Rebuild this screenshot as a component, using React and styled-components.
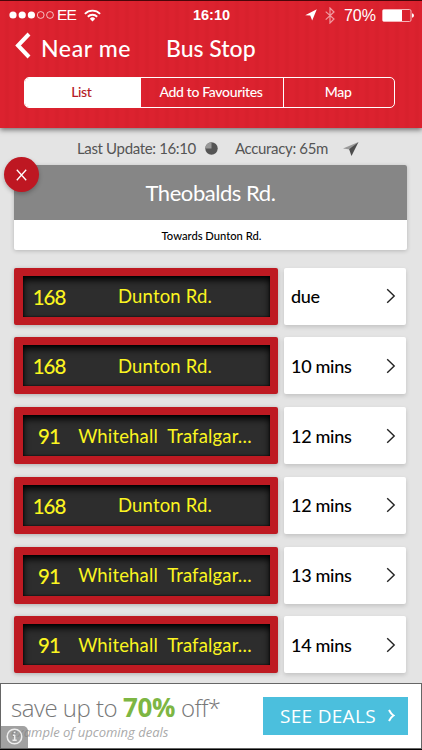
import React from "react";
import styled, { createGlobalStyle } from "styled-components";

const buses = [
  { route: "168", to: "Dunton Rd.", time: "due" },
  { route: "168", to: "Dunton Rd.", time: "10 mins" },
  { route: "91", to: "Whitehall  Trafalgar…", time: "12 mins" },
  { route: "168", to: "Dunton Rd.", time: "12 mins" },
  { route: "91", to: "Whitehall  Trafalgar…", time: "13 mins" },
  { route: "91", to: "Whitehall  Trafalgar…", time: "14 mins" },
];

const App = () => {
  return (
    <Screen>
      <GlobalStyle />
      <Header>
        <StatusBar>
          <Side>
            <svg width="46" height="8" viewBox="0 0 46 8" fill="#fff">
              <circle cx="4" cy="4" r="3.6" />
              <circle cx="13.2" cy="4" r="3.6" />
              <circle cx="22.4" cy="4" r="3.6" />
              <g fill="none" stroke="#fff" strokeWidth="0.7">
                <circle cx="31.7" cy="4" r="3.4" />
                <circle cx="41" cy="4" r="3.4" />
              </g>
            </svg>
            <Carrier>EE</Carrier>
            <svg width="17" height="13" viewBox="0 0 17 13" fill="none" stroke="#fff" strokeWidth="1.9">
              <path d="M0.9 4.8a10.8 10.8 0 0 1 15.2 0" />
              <path d="M3.8 7.7a6.7 6.7 0 0 1 9.4 0" />
              <path d="M8.5 12.4L5.8 9.7a3.8 3.8 0 0 1 5.4 0z" fill="#fff" stroke="none" />
            </svg>
          </Side>
          <Clock>16:10</Clock>
          <Side $end>
            <svg width="12" height="12" viewBox="0 0 12 12" fill="#fff">
              <path d="M11.8 0.2L0.2 6.2l5 0.4 2 5z" />
            </svg>
            <Bluetooth width="10" height="17" viewBox="0 0 10 17">
              <path d="M0.7 4.6L9 12 5 16V1l4 4-8.3 7.6" />
            </Bluetooth>
            <Percent>70%</Percent>
            <svg width="32" height="13" viewBox="0 0 32 13">
              <rect x="0.5" y="0.5" width="28.5" height="12" rx="1.5" fill="none" stroke="#f5b5b9" />
              <rect x="1" y="1" width="19" height="11" fill="#fff" />
              <path d="M30 4.3q2 0.4 2 2.2t-2 2.2z" fill="#fff" />
            </svg>
          </Side>
        </StatusBar>

        <NavBar>
          <BackIcon width="16" height="27" viewBox="0 0 16 27">
            <path d="M14 2L3 13.5 14 25" />
          </BackIcon>
          <Back>Near me</Back>
          <Title>Bus Stop</Title>
        </NavBar>

        <Tabs>
          <Tab $active $width="115px">List</Tab>
          <Tab $width="144px">Add to Favourites</Tab>
          <Tab $width="111px">Map</Tab>
        </Tabs>
      </Header>

      <Info>
        <Update>Last Update: 16:10</Update>
        <svg width="13" height="13" viewBox="0 0 13 13">
          <circle cx="6.5" cy="6.5" r="6.2" fill="#555" />
          <path d="M6.5 6.5V0.3A6.2 6.2 0 0 0 0.3 6.5z" fill="#999" />
        </svg>
        <Accuracy>Accuracy: 65m</Accuracy>
        <svg width="16" height="16" viewBox="0 0 17 16">
          <path d="M16.5 0.5L0 7.6l7.5 0.8z" fill="#999" />
          <path d="M16.5 0.5L6.5 8.2 9 15.5z" fill="#4c4c4c" />
        </svg>
      </Info>

      <StopCard>
        <Close>
          <svg width="11" height="12" viewBox="0 0 11 12" fill="none" stroke="#fff" strokeWidth="1.3">
            <path d="M0.8 0.8l9.4 10.4M10.2 0.8L0.8 11.2" />
          </svg>
        </Close>
        <StopName>Theobalds Rd.</StopName>
        <Towards>Towards Dunton Rd.</Towards>
      </StopCard>

      <List>
        {buses.map((bus, i) => (
          <Row key={i}>
            <Board>
              <Route>{bus.route}</Route>
              <Destination>{bus.to}</Destination>
            </Board>
            <Time>
              <span>{bus.time}</span>
              <svg width="10" height="16" viewBox="0 0 10 16" fill="none" stroke="#222" strokeWidth="1.4">
                <path d="M1.2 1.2L8.2 8 1.2 14.8" />
              </svg>
            </Time>
          </Row>
        ))}
      </List>

      <Banner>
        <Offer>
          <OfferTitle>
            save up to <b>70%</b> off*
          </OfferTitle>
          <Small>example of upcoming deals</Small>
        </Offer>
        <Deals>
          <span>SEE DEALS</span>
          <svg width="7" height="13" viewBox="0 0 7 13" fill="none" stroke="#fff" strokeWidth="2">
            <path d="M1 1q2 4 4.5 5.5Q3 8 1 12" />
          </svg>
        </Deals>
        <InfoBadge>
          <svg width="17" height="17" viewBox="0 0 17 17" fill="none" stroke="#eee" strokeWidth="1.5">
            <circle cx="8.5" cy="8.5" r="7.3" />
            <path d="M8.7 7v5M6.8 7.2h2M6.5 12.3h4.2M7.8 4.5h1.6" />
          </svg>
        </InfoBadge>
      </Banner>
    </Screen>
  );
};

const GlobalStyle = createGlobalStyle`
  body {
    margin: 0;
    background: #000;
  }
  * {
    box-sizing: border-box;
  }
  svg {
    display: block;
    flex: none;
  }
`;

const Screen = styled.div`
  width: 422px;
  height: 750px;
  overflow: hidden;
  display: flex;
  flex-direction: column;
  background: #e4e4e4;
  font-family: Lato, "Liberation Sans", sans-serif;
`;

const Header = styled.div`
  height: 128px;
  flex: none;
  border-top: 1px solid #4a0509;
  color: #fff;
  background: repeating-linear-gradient(90deg, #dc222f 0, #dc222f 4px, #d8212d 6px, #d8212d 8px, #dc222f 10px);
  box-shadow: 0 2px 5px rgba(0, 0, 0, 0.5);
`;

const StatusBar = styled.div`
  height: 28px;
  padding: 0 8px 0 9px;
  display: flex;
  align-items: center;
  font-family: "Liberation Sans", sans-serif;
  font-size: 16px;
`;

const Side = styled.div`
  flex: 1;
  display: flex;
  align-items: center;
  justify-content: ${(props) => (props.$end ? "flex-end" : "flex-start")};
`;

const Carrier = styled.span`
  margin: 0 8px 0 2px;
  font-size: 15.5px;
  letter-spacing: -0.9px;
`;

const Clock = styled.span`
  font-size: 14.5px;
  font-weight: bold;
`;

const Bluetooth = styled.svg`
  margin: 0 9px 0 8px;
  fill: none;
  stroke: #f09aa0;
  stroke-width: 1.2;
`;

const Percent = styled.span`
  margin: 1px 6px 0 0;
`;

const NavBar = styled.div`
  height: 48px;
  padding: 0 0 14px 15px;
  display: flex;
  align-items: center;
  font-size: 23px;
  font-weight: 500;
`;

const BackIcon = styled.svg`
  margin-top: -2px;
  fill: none;
  stroke: #fff;
  stroke-width: 4;
`;

const Back = styled.span`
  margin: 4px 0 0 10px;
  width: 125px;
  letter-spacing: 0.6px;
`;

const Title = styled.span`
  margin-top: 4px;
`;

const Tabs = styled.div`
  width: 371px;
  height: 31px;
  margin-left: 24px;
  display: flex;
  border: 1.5px solid #fff;
  border-radius: 5px;
  overflow: hidden;
`;

const Tab = styled.div`
  width: ${(props) => props.$width};
  display: flex;
  align-items: center;
  justify-content: center;
  padding: 0 2px 2px 0;
  font-size: 14px;
  letter-spacing: -0.35px;
  font-weight: 500;
  background: ${(props) => (props.$active ? "#fff" : "transparent")};
  color: ${(props) => (props.$active ? "#b51b27" : "#fff")};
  & + & {
    border-left: 1px solid #fff;
  }
`;

const Info = styled.div`
  height: 37px;
  flex: none;
  padding: 4px 0 0 77px;
  display: flex;
  align-items: center;
  font-size: 15px;
  letter-spacing: -0.35px;
  color: #555;
`;

const Update = styled.span`
  width: 128px;
  margin-top: -1px;
  white-space: nowrap;
`;

const Accuracy = styled.span`
  width: 108px;
  margin: -1px 0 0 17px;
  white-space: nowrap;
`;

const StopCard = styled.div`
  position: relative;
  flex: none;
  width: 393px;
  height: 85px;
  margin-left: 14px;
  background: #fff;
  border-radius: 2px;
  box-shadow: 0 1px 4px rgba(0, 0, 0, 0.2);
`;

const Close = styled.div`
  position: absolute;
  left: -10px;
  top: -8px;
  width: 35px;
  height: 35px;
  border-radius: 50%;
  display: flex;
  align-items: center;
  justify-content: center;
  background: #be1722;
  box-shadow: 0 2px 4px rgba(0, 0, 0, 0.25);
`;

const StopName = styled.div`
  height: 55px;
  display: flex;
  align-items: center;
  justify-content: center;
  background: #868686;
  border-radius: 2px 2px 0 0;
  color: #fff;
  font-size: 22px;
  letter-spacing: -0.45px;
`;

const Towards = styled.div`
  height: 30px;
  line-height: 32px;
  text-align: center;
  font-size: 11.2px;
  font-weight: 500;
  color: #000;
  padding-left: 2px;
`;

const List = styled.div`
  flex: none;
  margin: 17.5px 0 0 14px;
  display: flex;
  flex-direction: column;
  gap: 12.8px;
`;

const Row = styled.div`
  display: flex;
  gap: 6px;
  height: 57px;
`;

const Board = styled.div`
  width: 264px;
  border: solid #be1a22;
  border-width: 8px 8px 8px 9px;
  border-radius: 2px;
  background: #2d2d2d;
  box-shadow: 0 1px 4px rgba(0, 0, 0, 0.25), inset 0 4px 7px #000, inset 0 0 2px #000;
  display: flex;
  align-items: center;
  color: #fbf520;
`;

const Route = styled.span`
  width: 52px;
  padding-top: 1px;
  text-align: center;
  font-size: 20.5px;
  font-weight: 500;
  letter-spacing: -1px;
`;

const Destination = styled.span`
  flex: 1;
  padding: 0 15px 0 0;
  text-align: center;
  font-size: 18.5px;
  letter-spacing: 0.15px;
  white-space: pre;
`;

const Time = styled.div`
  width: 122px;
  padding: 0 10px 0 7px;
  display: flex;
  align-items: center;
  justify-content: space-between;
  background: #fff;
  border-radius: 2px;
  box-shadow: 0 2px 4px rgba(0, 0, 0, 0.15);
  font-size: 18px;
  font-weight: 500;
  letter-spacing: -0.3px;
  color: #000;
`;

const Banner = styled.div`
  position: relative;
  flex: none;
  height: 66px;
  margin-top: 9.5px;
  padding: 0 13px 0 10px;
  display: flex;
  align-items: center;
  justify-content: space-between;
  background: #fff;
  border: 1px solid #666;
  box-shadow: 0 2px 0 #000;
  font-family: "Open Sans", sans-serif;
`;

const Offer = styled.div`
  white-space: nowrap;
`;

const OfferTitle = styled.div`
  font-size: 24px;
  line-height: 33px;
  font-weight: 300;
  color: #777;
  letter-spacing: -0.5px;
  b {
    font-size: 26px;
    font-weight: 700;
    color: #7db643;
    letter-spacing: -0.3px;
  }
`;

const Small = styled.div`
  font-size: 13px;
  line-height: 17px;
  font-style: italic;
  color: #aaa;
`;

const Deals = styled.div`
  width: 145px;
  height: 38px;
  padding: 0 13px 0 17px;
  display: flex;
  align-items: center;
  justify-content: space-between;
  background: #4bbfdd;
  color: #fff;
  font-size: 19px;
  font-weight: 500;
  letter-spacing: 0.3px;
  white-space: nowrap;
`;

const InfoBadge = styled.div`
  position: absolute;
  left: 0;
  bottom: 0;
  width: 27px;
  height: 22px;
  display: flex;
  align-items: center;
  justify-content: center;
  background: rgba(130, 130, 130, 0.75);
  border-top-right-radius: 5px;
`;

export default App;
